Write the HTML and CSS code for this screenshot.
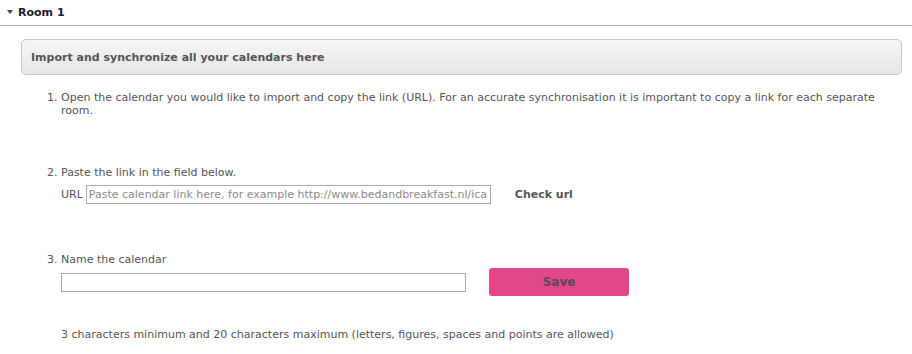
FILE: index.html
```html
<!DOCTYPE html>
<html lang="en">
<head>
    <meta charset="UTF-8">
    <title>Room 1 - Calendar import</title>
    <link rel="stylesheet" href="styles.css">
</head>
<body>

<div class="room">
    <div class="room-header">
        <span class="caret"></span>
        <span class="room-title">Room 1</span>
    </div>

    <div class="room-body">
        <div class="panel-title">Import and synchronize all your calendars here</div>

        <ol class="steps">
            <li class="step step-open">
                Open the calendar you would like to import and copy the link (URL). For an accurate synchronisation it is important to copy a link for each separate room.
            </li>
            <li class="step step-url">
                Paste the link in the field below.
                <div class="row">
                    <label for="url" class="url-label">URL</label>
                    <input type="text" id="url" class="field field-url" placeholder="Paste calendar link here, for example http://www.bedandbreakfast.nl/ical">
                    <a class="check-link">Check url</a>
                </div>
            </li>
            <li class="step step-name">
                Name the calendar
                <div class="row row-name">
                    <input type="text" id="calname" class="field field-name">
                    <button type="button" class="save-btn">Save</button>
                </div>
                <p class="hint">3 characters minimum and 20 characters maximum (letters, figures, spaces and points are allowed)</p>
            </li>
        </ol>
    </div>
</div>

</body>
</html>
```

FILE: styles.css
```css
:root {
    --text-color: #555555;
    --border-color: #cccccc;
    --pink: #e2468b;
    --font-family: 'DejaVu Sans', sans-serif;
}

* {
    box-sizing: border-box;
}

body {
    margin: 0;
    font-family: var(--font-family);
    font-size: 11px;
    color: var(--text-color);
    background: #ffffff;
}

.room-header {
    display: flex;
    align-items: center;
    height: 26px;
    padding: 0 0 1px 7px;
    border-bottom: 1px solid #a9a9a9;
}

.caret {
    width: 0;
    height: 0;
    border-left: 3.5px solid transparent;
    border-right: 3.5px solid transparent;
    border-top: 4px solid #444;
    margin-right: 5px;
}

.room-title {
    font-weight: bold;
    color: #1c1c2a;
}

.room-body {
    padding: 13px 10px 0 21px;
}

.panel-title {
    height: 36px;
    padding: 0 9px;
    display: flex;
    align-items: center;
    border: 1px solid #c8c8c8;
    border-radius: 5px;
    background: linear-gradient(#f6f6f6, #e6e6e6);
    font-weight: bold;
}

.steps {
    margin: 16px 0 0;
    padding-left: 40px;
    line-height: 13px;
}

.step-url {
    margin-top: 49px;
}

.step-name {
    margin-top: 49px;
}

.row {
    display: flex;
    align-items: center;
    margin-top: 6px;
}

.url-label {
    margin-right: 3px;
}

.field {
    height: 19px;
    border: 1px solid #a8a8a8;
    padding: 0 2px;
    font-family: var(--font-family);
    font-size: 11px;
    color: var(--text-color);
}

.field::placeholder {
    color: #8a8a8a;
}

.field-url {
    width: 405px;
}

.check-link {
    margin-left: 24px;
    font-weight: bold;
    cursor: pointer;
}

.row-name {
    margin-top: 2px;
}

.field-name {
    width: 405px;
}

.save-btn {
    width: 140px;
    height: 28px;
    margin-left: 23px;
    border: none;
    border-radius: 3px;
    background: var(--pink);
    color: #5a4a55;
    font-family: var(--font-family);
    font-size: 12px;
    font-weight: bold;
    cursor: pointer;
}

.hint {
    margin: 32px 0 0;
}
```
